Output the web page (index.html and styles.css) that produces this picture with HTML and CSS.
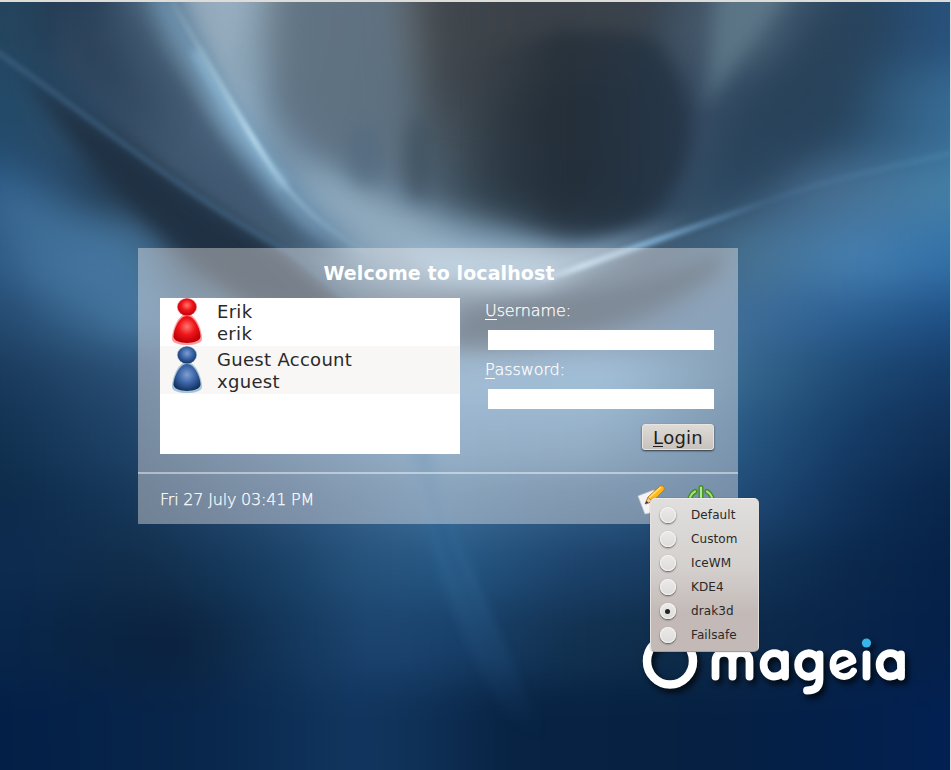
FILE: index.html
```html
<!DOCTYPE html>
<html lang="en">
<head>
<meta charset="utf-8">
<title>Welcome to localhost</title>
<link rel="stylesheet" href="styles.css">
</head>
<body>
<svg class="wallpaper" width="951" height="770" viewBox="0 0 951 770" color-interpolation-filters="sRGB" aria-hidden="true">
  <defs>
    <linearGradient id="w" gradientUnits="userSpaceOnUse" x1="0" y1="0" x2="951" y2="0"/>
    <linearGradient id="r0" href="#w"><stop offset="0" stop-color="#24465f"/><stop offset=".1" stop-color="#283f58"/><stop offset=".2" stop-color="#6d8ba2"/><stop offset=".28" stop-color="#7f93a0"/><stop offset=".42" stop-color="#5c646a"/><stop offset=".55" stop-color="#3b4045"/><stop offset=".68" stop-color="#38495a"/><stop offset=".79" stop-color="#4f6477"/><stop offset=".9" stop-color="#27435d"/><stop offset="1" stop-color="#28527d"/></linearGradient>
    <linearGradient id="r1" href="#w"><stop offset="0" stop-color="#224a6a"/><stop offset=".15" stop-color="#34495f"/><stop offset=".26" stop-color="#8fb2ca"/><stop offset=".32" stop-color="#667c94"/><stop offset=".43" stop-color="#53626c"/><stop offset=".5" stop-color="#38434c"/><stop offset=".6" stop-color="#25303a"/><stop offset=".75" stop-color="#384e66"/><stop offset=".87" stop-color="#28455f"/><stop offset="1" stop-color="#386d97"/></linearGradient>
    <linearGradient id="r2" href="#w"><stop offset="0" stop-color="#2b5a87"/><stop offset=".12" stop-color="#22384c"/><stop offset=".24" stop-color="#4b6780"/><stop offset=".34" stop-color="#7c9fb8"/><stop offset=".42" stop-color="#5f788e"/><stop offset=".5" stop-color="#33434f"/><stop offset=".62" stop-color="#22303f"/><stop offset=".75" stop-color="#38546d"/><stop offset=".88" stop-color="#476f92"/><stop offset="1" stop-color="#4480a8"/></linearGradient>
    <linearGradient id="r3" href="#w"><stop offset="0" stop-color="#2e5a85"/><stop offset=".12" stop-color="#4677a0"/><stop offset=".22" stop-color="#2b3f50"/><stop offset=".33" stop-color="#55758f"/><stop offset=".42" stop-color="#86abc5"/><stop offset=".55" stop-color="#6f91ab"/><stop offset=".68" stop-color="#3e566e"/><stop offset=".78" stop-color="#46708f"/><stop offset=".9" stop-color="#457fb0"/><stop offset="1" stop-color="#3270a8"/></linearGradient>
    <linearGradient id="r4" href="#w"><stop offset="0" stop-color="#24496f"/><stop offset=".15" stop-color="#4779a1"/><stop offset=".3" stop-color="#3f5a72"/><stop offset=".45" stop-color="#40546a"/><stop offset=".6" stop-color="#3a4f66"/><stop offset=".75" stop-color="#44719b"/><stop offset=".88" stop-color="#2d6094"/><stop offset="1" stop-color="#1e4f84"/></linearGradient>
    <linearGradient id="r5" href="#w"><stop offset="0" stop-color="#18395a"/><stop offset=".15" stop-color="#2b5077"/><stop offset=".3" stop-color="#4c759c"/><stop offset=".45" stop-color="#6a9ac2"/><stop offset=".64" stop-color="#6da5d2"/><stop offset=".77" stop-color="#38698f"/><stop offset=".9" stop-color="#1c4872"/><stop offset="1" stop-color="#143a66"/></linearGradient>
    <linearGradient id="r6" href="#w"><stop offset="0" stop-color="#113150"/><stop offset=".15" stop-color="#20456b"/><stop offset=".3" stop-color="#3d688f"/><stop offset=".45" stop-color="#588ab3"/><stop offset=".62" stop-color="#5585ae"/><stop offset=".77" stop-color="#285a85"/><stop offset=".9" stop-color="#143a64"/><stop offset="1" stop-color="#0f2e55"/></linearGradient>
    <linearGradient id="r7" href="#w"><stop offset="0" stop-color="#0c2a4a"/><stop offset=".15" stop-color="#17385a"/><stop offset=".3" stop-color="#2a5079"/><stop offset=".45" stop-color="#3d6d98"/><stop offset=".6" stop-color="#2f5c86"/><stop offset=".77" stop-color="#204c78"/><stop offset=".9" stop-color="#0f3058"/><stop offset="1" stop-color="#08244a"/></linearGradient>
    <linearGradient id="r8" href="#w"><stop offset="0" stop-color="#0c2b50"/><stop offset=".15" stop-color="#112d4a"/><stop offset=".28" stop-color="#163d61"/><stop offset=".38" stop-color="#25527b"/><stop offset=".48" stop-color="#245783"/><stop offset=".6" stop-color="#1c426b"/><stop offset=".77" stop-color="#143659"/><stop offset=".9" stop-color="#0a274b"/><stop offset="1" stop-color="#052148"/></linearGradient>
    <linearGradient id="r9" href="#w"><stop offset="0" stop-color="#08264a"/><stop offset=".19" stop-color="#0b223e"/><stop offset=".29" stop-color="#123458"/><stop offset=".39" stop-color="#1c4570"/><stop offset=".48" stop-color="#18406a"/><stop offset=".6" stop-color="#123150"/><stop offset=".75" stop-color="#0d2a48"/><stop offset=".9" stop-color="#08244a"/><stop offset="1" stop-color="#04204a"/></linearGradient>
    <linearGradient id="r10" href="#w"><stop offset="0" stop-color="#031f47"/><stop offset=".2" stop-color="#08254a"/><stop offset=".3" stop-color="#0d2e55"/><stop offset=".37" stop-color="#11365f"/><stop offset=".44" stop-color="#0f3158"/><stop offset=".53" stop-color="#082343"/><stop offset=".75" stop-color="#052042"/><stop offset="1" stop-color="#022052"/></linearGradient>
    <linearGradient id="ridge" gradientUnits="userSpaceOnUse" x1="170" y1="0" x2="400" y2="270">
      <stop offset="0" stop-color="#8ba6b5" stop-opacity=".3"/><stop offset=".45" stop-color="#c4e3f2" stop-opacity=".85"/>
      <stop offset=".65" stop-color="#9fc2da" stop-opacity=".5"/><stop offset="1" stop-color="#8db2cc" stop-opacity="0"/>
    </linearGradient>
    <linearGradient id="ridge2" gradientUnits="userSpaceOnUse" x1="540" y1="0" x2="951" y2="0">
      <stop offset="0" stop-color="#b4d8ee" stop-opacity=".3"/><stop offset=".1" stop-color="#b4d8ee"/><stop offset=".3" stop-color="#7fb0d6" stop-opacity=".8"/><stop offset=".55" stop-color="#5d8bb4" stop-opacity=".15"/><stop offset="1" stop-color="#5790b0" stop-opacity=".3"/>
    </linearGradient>
    <linearGradient id="beam" x1="0" y1="0" x2="0" y2="1"><stop offset="0" stop-color="#3f77a6"/><stop offset=".45" stop-color="#2d5f8c"/><stop offset="1" stop-color="#173f68" stop-opacity="0"/></linearGradient>
    <filter id="b2" x="-30%" y="-30%" width="160%" height="160%"><feGaussianBlur stdDeviation="1.9"/></filter>
    <filter id="b5" x="-50%" y="-50%" width="200%" height="200%"><feGaussianBlur stdDeviation="5"/></filter>
    <filter id="b8" x="-50%" y="-50%" width="200%" height="200%"><feGaussianBlur stdDeviation="9"/></filter>
    <filter id="b18" x="-60%" y="-60%" width="220%" height="220%"><feGaussianBlur stdDeviation="18"/></filter>
    <filter id="b24" filterUnits="userSpaceOnUse" x="-80" y="-80" width="1111" height="930"><feGaussianBlur stdDeviation="22"/></filter>
    <linearGradient id="pit" x1="0" y1="0" x2="1" y2="0"><stop offset="0" stop-color="#27323c" stop-opacity="0"/><stop offset=".4" stop-color="#232e38"/><stop offset="1" stop-color="#223244"/></linearGradient>
  </defs>
  <g filter="url(#b24)">
    <path fill="url(#r0)" d="M-80-80H1031V70H-80Z"/><path fill="url(#r1)" d="M-80 70H1031V160H-80Z"/>
    <path fill="url(#r2)" d="M-80 160H1031V225H-80Z"/><path fill="url(#r3)" d="M-80 225H1031V290H-80Z"/>
    <path fill="url(#r4)" d="M-80 290H1031V345H-80Z"/><path fill="url(#r5)" d="M-80 345H1031V405H-80Z"/>
    <path fill="url(#r6)" d="M-80 405H1031V470H-80Z"/><path fill="url(#r7)" d="M-80 470H1031V535H-80Z"/>
    <path fill="url(#r8)" d="M-80 535H1031V600H-80Z"/><path fill="url(#r9)" d="M-80 600H1031V680H-80Z"/>
    <path fill="url(#r10)" d="M-80 680H1031V850H-80Z"/>
  </g>
  <path filter="url(#b18)" fill="#98b0c3" d="M190-40H275C245 50 260 120 300 160L390 200 480 240 570 255 560 280 400 280C310 220 250 120 190-40Z" opacity=".85"/>
  <path filter="url(#b8)" fill="#9ab0c2" d="M178-20H240L236 70 262 135C225 95 200 40 178-20Z" opacity=".7"/>
  <path filter="url(#b18)" fill="#5f7282" d="M280-30H400L410 185 340 165 268 115Z" opacity=".9"/>
  <path filter="url(#b18)" fill="#3b4148" d="M420-40H680L640 60 440 110Z" opacity=".75"/>
  <path filter="url(#b8)" fill="url(#pit)" d="M470 60 560 30 650 35C700 90 708 160 655 210 610 245 530 240 470 205Z" opacity=".75"/>
  <ellipse filter="url(#b8)" cx="418" cy="160" rx="14" ry="42" fill="#3a4c5b" opacity=".6"/>
  <ellipse filter="url(#b8)" cx="365" cy="155" rx="18" ry="32" fill="#526a80" opacity=".6"/>
  <path filter="url(#b8)" fill="#668494" d="M718-20H800L718 90 705 110Z" opacity=".6"/>
  <path filter="url(#b18)" fill="#28425a" d="M810 20 880-10 850 110 770 190 690 220 720 130Z" opacity=".85"/>
  <path filter="url(#b8)" fill="#3b526b" d="M60 10 140 20C200 110 265 190 345 258L290 248C200 195 120 120 60 60Z" opacity=".75"/>
  <path filter="url(#b18)" fill="#243a52" d="M20-10H90C120 50 130 100 170 130L80 80Z" opacity=".6"/>
  <path filter="url(#b8)" fill="#7097b5" d="M145-10 173 0C225 85 265 160 350 250L310 232C230 165 210 80 145-10Z" opacity=".9"/>
  <path filter="url(#b18)" fill="#4678a2" d="M-20 180 50 190 150 250 170 330 40 290Z" opacity=".6"/>
  <path filter="url(#b8)" fill="#1f3042" d="M20 72C100 130 205 200 285 252L375 330 250 305C150 240 90 165 20 72Z" opacity=".95"/>
  <path filter="url(#b2)" fill="none" stroke="#487094" stroke-width="6" opacity=".42" d="M-10 47C75 105 190 200 290 252L350 300"/>
  <path filter="url(#b8)" fill="#263b4f" d="M725 250C650 285 580 290 470 310L440 345C560 355 650 320 715 275Z" opacity=".7"/>
  <path filter="url(#b8)" fill="#a0c4de" d="M400 250 560 255 640 235 690 221 630 247 540 285 440 280Z" opacity=".75"/>
  <path filter="url(#b5)" fill="none" stroke="#9bcbe8" stroke-width="10" opacity=".55" d="M195 50C215 85 240 131 285 187"/>
  <path filter="url(#b2)" fill="none" stroke="url(#ridge)" stroke-width="5" d="M172 2C207 60 230 102 262 153S320 225 370 255"/>
  <path filter="url(#b2)" fill="none" stroke="url(#ridge2)" stroke-width="6" d="M540 279 560 274C640 245 700 226 765 202S880 170 951 153"/>
  <path filter="url(#b5)" fill="url(#beam)" d="M405 440H432C450 540 490 600 545 740L510 720C460 650 430 560 405 440Z" opacity=".65"/>
  <path filter="url(#b2)" fill="url(#beam)" d="M414 440H424C440 510 460 570 500 660 460 600 430 530 414 440Z" opacity=".7"/>
</svg>

<main class="screen">
  <section class="login">
    <h1 class="title">Welcome to localhost</h1>
    <div class="content">
      <ul class="users">
        <li class="user">
          <svg class="avatar" width="32" height="48" viewBox="0 0 32 48">
            <defs>
              <radialGradient id="red" cx=".5" cy=".4" r=".62"><stop offset="0" stop-color="#ff7770"/><stop offset=".5" stop-color="#ee1419"/><stop offset="1" stop-color="#b90006"/></radialGradient>
              <radialGradient id="blue" cx=".5" cy=".4" r=".62"><stop offset="0" stop-color="#7e9fd0"/><stop offset=".5" stop-color="#3c66a8"/><stop offset="1" stop-color="#12305f"/></radialGradient>
            </defs>
            <path d="M16 16C7 16 1 32 1 41c0 8 30 8 30 0 0-9-6-25-15-25Z" fill="#ff9a9a"/>
            <path d="M16 18C8 18 2.500 32 2.500 38.500c0 8.500 27 8.500 27 0 0-6.500-5.500-20.500-13.500-20.500Z" fill="url(#red)"/>
            <ellipse cx="16" cy="9" rx="10" ry="9" fill="#f48a88"/><ellipse cx="16" cy="9" rx="9.300" ry="8.600" fill="url(#red)"/>
          </svg>
          <div class="names"><span>Erik</span><span>erik</span></div>
        </li>
        <li class="user user-alt">
          <svg class="avatar" width="32" height="48" viewBox="0 0 32 48">
            <path d="M16 16C7 16 1 32 1 41c0 8 30 8 30 0 0-9-6-25-15-25Z" fill="#a7c5d4"/>
            <path d="M16 18C8 18 2.500 32 2.500 38.500c0 8.500 27 8.500 27 0 0-6.500-5.500-20.500-13.500-20.500Z" fill="url(#blue)"/>
            <ellipse cx="16" cy="9" rx="10" ry="9" fill="#9bb9cc"/><ellipse cx="16" cy="9" rx="9.300" ry="8.600" fill="url(#blue)"/>
          </svg>
          <div class="names"><span>Guest Account</span><span>xguest</span></div>
        </li>
      </ul>
      <form class="fields">
        <label for="username"><span class="key">U</span>sername:</label>
        <input id="username" type="text">
        <label for="password"><span class="key">P</span>assword:</label>
        <input id="password" type="password">
        <button class="submit" type="button"><span class="key">L</span>ogin</button>
      </form>
    </div>
    <footer class="bar">
      <time>Fri 27 July 03:41 PM</time>
      <div class="tools">
        <svg width="32" height="32" viewBox="0 0 32 32">
          <path d="M2 11 18 5 26 25 9 29Z" fill="#f4f4f8" stroke="#c9ccd6" stroke-width=".7"/>
          <path d="M10 17 12 12 24 1C27 0 29 2 28 5L17 16 10 19Z" fill="#ffb71b" stroke="#c47a0a" stroke-width=".9"/>
          <path d="M13 13 25 2" stroke="#ffe07a" stroke-width="1.500"/>
          <path d="M9 19 12 12.500 16.500 16.500Z" fill="#f0d2a0" stroke="#8b6b3c" stroke-width=".6"/>
          <path d="M9 19 10.500 16 12.500 17.500Z" fill="#333"/>
        </svg>
        <svg width="32" height="32" viewBox="0 0 32 32">
          <g fill="none" stroke-linecap="round">
            <path d="M11 6.500C2 12 5 25 17 25S32 12 23 6.500" stroke="#3f8f1c" stroke-width="5"/>
            <path d="M11 6.500C2 12 5 25 17 25S32 12 23 6.500" stroke="#a9de82" stroke-width="2.200"/>
            <path d="M17 2.500V15" stroke="#3f8f1c" stroke-width="5"/>
            <path d="M17 2.500V15" stroke="#b4e494" stroke-width="2.200"/>
          </g>
        </svg>
      </div>
    </footer>
  </section>
</main>

<svg class="logo" width="290" height="80" viewBox="0 0 290 80" role="img" aria-label="mageia">
  <g fill="none" stroke="#fff" stroke-linecap="round" stroke-linejoin="round" stroke-width="7.800">
    <ellipse cx="40" cy="41" rx="23" ry="23.500" stroke-width="8.500"/>
    <path d="M85.500 56.500V41C85.500 30 102.500 30 102.500 41V56.500M102.500 41C102.500 30 119.500 30 119.500 41V56.500"/>
    <path d="M155 56.500V45A10.700 11.700 0 1 0 144.300 56.500Q151 56.500 155 50M155 45V34.500"/>
    <path d="M189.500 44A10.700 11.700 0 1 0 189.500 46M189.500 34.500V59Q189.500 70.500 177 70.500"/>
    <path d="M206 48.500 223 41C220 29 202.500 31 203 45 203 58 219 60 223.500 51" stroke-width="6.800"/>
    <path d="M236.500 34.500V56.500"/>
    <path d="M271 56.500V45A10.700 11.700 0 1 0 260.300 56.500Q267 56.500 271 50M271 45V34.500"/>
  </g>
  <circle cx="236.500" cy="23" r="4.600" fill="#35b5ea"/>
</svg>

<ul class="sessions">
  <li><i class="radio"></i>Default</li>
  <li><i class="radio"></i>Custom</li>
  <li><i class="radio"></i>IceWM</li>
  <li><i class="radio"></i>KDE4</li>
  <li><i class="radio radio-on"></i>drak3d</li>
  <li><i class="radio"></i>Failsafe</li>
</ul>
</body>
</html>
```
FILE: styles.css
```css
* { box-sizing: border-box; }

body {
  position: relative;
  margin: 0;
  width: 951px;
  height: 770px;
  overflow: hidden;
  background: #17406a;
  font-family: "DejaVu Sans", sans-serif;
}

ul { margin: 0; padding: 0; list-style: none; }
svg { display: block; }

.wallpaper { position: absolute; inset: 0; }

.screen {
  position: relative;
  height: 770px;
  padding: 246px 0 0 138px;
  border-top: 2px solid #dedcd8;
  border-right: 1px solid #dedcd8;
}

.login {
  display: flex;
  flex-direction: column;
  width: 600px;
  height: 276px;
  background: rgba(240, 236, 236, .42);
}

.title {
  margin: 0;
  padding-top: 14px;
  height: 50px;
  padding-left: 2px;
  color: #fff;
  font-size: 19px;
  font-weight: bold;
  letter-spacing: .1px;
  line-height: 22px;
  text-align: center;
}

.content {
  display: flex;
  height: 174px;
  padding: 0 24px 0 22px;
}

.users { width: 300px; height: 156px; background: #fff; }

.user {
  display: flex;
  height: 48px;
  padding-left: 11px;
  color: #2a2a2a;
  font-size: 18px;
  letter-spacing: .3px;
  line-height: 22px;
}

.user-alt { background: #f8f7f6; }
.names { display: flex; flex-direction: column; padding: 3px 0 0 14px; }

.fields {
  display: flex;
  flex-direction: column;
  width: 229px;
  margin-left: 25px;
  color: #fff;
  font-size: 16px;
  font-weight: 200;
  letter-spacing: -.1px;
  -webkit-text-stroke: .25px #fff;
}

.fields label { height: 32px; padding-top: 3px; line-height: 20px; }
.fields .key { display: inline-block; height: 19px; border-bottom: 1px solid; }

.fields input {
  width: 226px;
  height: 20px;
  margin: 0 0 7px 3px;
  padding: 0 4px;
  border: 0;
  background: #fff;
}

.fields .submit {
  align-self: flex-end;
  width: 72px;
  height: 26px;
  margin-top: 8px;
  padding: 0;
  border: 1px solid #e8e5e1;
  border-radius: 3px;
  background: linear-gradient(#dedbd7, #c7c2bc);
  box-shadow: 0 1px 2px rgba(0, 0, 0, .65);
  color: #221f1e;
  font: 18px/25px "DejaVu Sans", sans-serif;
  letter-spacing: .2px;
  -webkit-text-stroke: 0;
}

.fields .submit .key { height: 22px; line-height: 25px; }

.bar {
  display: flex;
  justify-content: space-between;
  height: 52px;
  padding: 11px 22px 0;
  border-top: 2px solid rgba(255, 255, 255, .45);
  color: #fff;
  font-size: 16px;
  font-weight: 200;
  letter-spacing: -.2px;
  -webkit-text-stroke: .25px #fff;
}

.bar time { padding-top: 5px; line-height: 20px; }
.tools { display: flex; gap: 16px; }

.logo {
  position: absolute;
  left: 630px;
  top: 620px;
  filter: drop-shadow(3px 4px 3px rgba(0, 0, 0, .75));
}

.sessions {
  position: absolute;
  left: 650px;
  top: 498px;
  width: 109px;
  height: 154px;
  padding: 4px 0 0 8px;
  border: 1px solid;
  border-color: #efedeb #e0dcda #a59d9a #e4e1df;
  border-radius: 5px;
  background: linear-gradient(#e0dfdd, #d4d0ce 45%, #c3bab7 75%, #c3bab7);
  box-shadow: 0 0 1px rgba(0, 0, 0, .6);
  color: #2b2927;
  font-size: 12px;
  letter-spacing: .1px;
}

.sessions li { display: flex; align-items: center; height: 24px; }

.radio {
  display: flex;
  align-items: center;
  justify-content: center;
  width: 16px;
  height: 16px;
  margin: 0 15.500px 0 .5px;
  border-radius: 50%;
  background: linear-gradient(#eceae9, #dedcda);
  box-shadow: 0 1px 2px rgba(0, 0, 0, .6), inset 0 0 0 1px #f2f1f0;
}

.radio-on::after {
  width: 5px;
  height: 5px;
  border-radius: 50%;
  background: #222;
  content: "";
}
```
